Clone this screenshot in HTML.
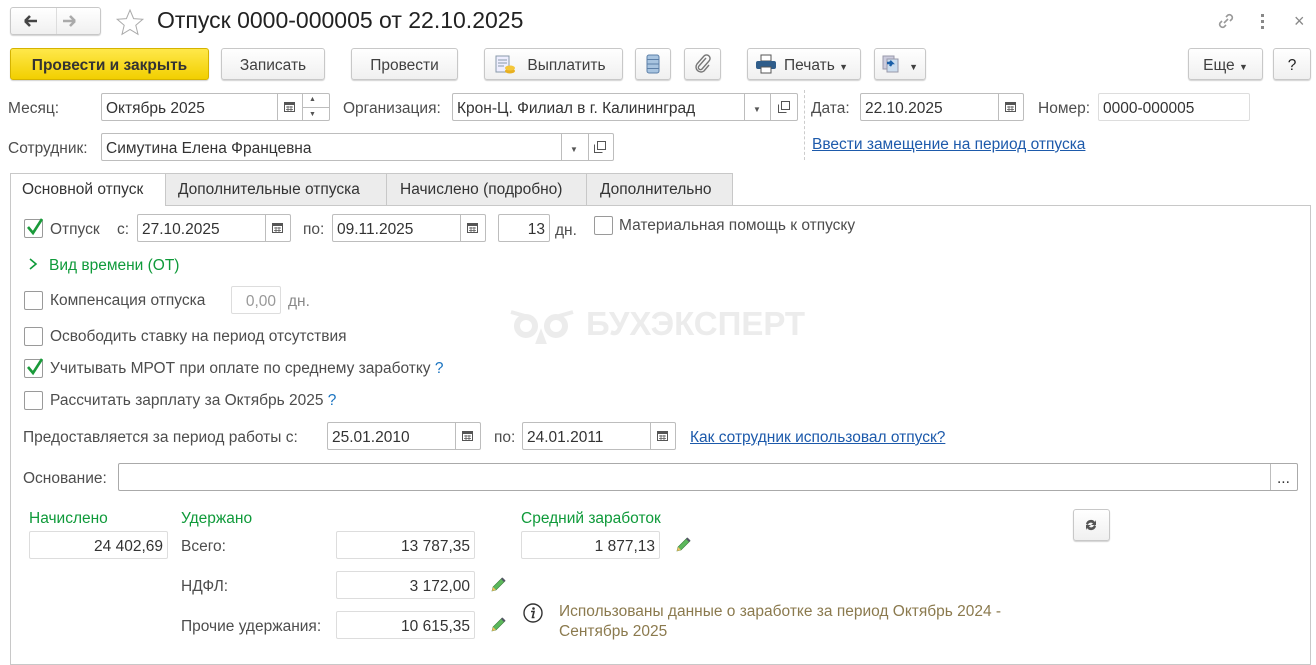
<!DOCTYPE html>
<html><head><meta charset="utf-8">
<style>
*{box-sizing:border-box;margin:0;padding:0}
body{width:1316px;height:649px;overflow:hidden;background:#fff;font-family:"Liberation Sans",Arial,sans-serif;font-size:15.5px;color:#4d4d4d;position:relative}
.a{position:absolute;white-space:nowrap}
div.a{margin-top:2px}
.btn{position:absolute;border:1px solid #c8c8c8;border-radius:3px;background:linear-gradient(#fff,#f0f0f0);box-shadow:0 1px 1px rgba(0,0,0,.18);color:#404040;text-align:center;line-height:33px;height:32px}
.f{position:absolute;border:1px solid #bdbdbd;border-radius:2px;background:#fff;height:28px;line-height:29px;padding:0 4px;color:#333}
.r{text-align:right}
.sep{position:absolute;top:0;bottom:0;border-left:1px solid #bdbdbd}
.cb{position:absolute;width:19px;height:19px;border:1px solid #9a9a9a;border-radius:2px;background:#fff}
.g{color:#0f9a3a}
.lnk{color:#1d5aab;text-decoration:underline}
.q{color:#1a73c0}
.cal{position:absolute;width:11px;height:11px}
</style></head><body>
<!-- header -->
<div class="btn" style="left:10px;top:7px;width:91px;height:28px;line-height:26px"><div class="sep" style="left:45px;border-color:#ddd"></div></div>
<svg class="a" style="left:22px;top:13px" width="70" height="16"><path d="M3 8h12M3 8l5-5M3 8l5 5" stroke="#444" stroke-width="2.6" fill="none"/><path d="M53 8h-12M53 8l-5-5M53 8l-5 5" stroke="#aaa" stroke-width="2.6" fill="none"/></svg>
<svg class="a" style="left:115px;top:8px" width="30" height="28"><path d="M15 2l3.6 8.6 9.2.7-7 6 2.2 9-8-4.8-8 4.8 2.2-9-7-6 9.2-.7z" fill="none" stroke="#aaa" stroke-width="1"/></svg>
<div class="a" style="left:157px;top:7px;font-size:23px;color:#222;margin-top:0">Отпуск 0000-000005 от 22.10.2025</div>
<svg class="a" style="left:1215px;top:10px" width="22" height="22"><g fill="none" stroke="#999" stroke-width="1.6"><path d="M9 13l4-4"/><path d="M7 11l-2 2a3 3 0 004 4l2-2"/><path d="M15 11l2-2a3 3 0 00-4-4l-2 2"/></g></svg>
<div class="a" style="left:1261px;top:12px;width:4px"><div style="width:3px;height:3px;background:#888;margin-bottom:3px"></div><div style="width:3px;height:3px;background:#888;margin-bottom:3px"></div><div style="width:3px;height:3px;background:#888"></div></div>
<div class="a" style="left:1294px;top:9px;font-size:18px;color:#888">×</div>
<!-- toolbar -->
<div class="btn" style="left:10px;top:48px;width:199px;background:linear-gradient(#ffe84a,#f2cf00);border-color:#d5b300;color:#333;font-weight:bold">Провести и закрыть</div>
<div class="btn" style="left:221px;top:48px;width:104px">Записать</div>
<div class="btn" style="left:351px;top:48px;width:107px">Провести</div>
<div class="btn" style="left:484px;top:48px;width:139px;padding-left:26px">Выплатить</div>
<svg class="a" style="left:495px;top:55px" width="22" height="20"><rect x="1" y="1" width="13" height="16" fill="#eef" stroke="#8899aa"/><path d="M3 5h9M3 8h9M3 11h6" stroke="#8899aa"/><ellipse cx="15" cy="16" rx="5" ry="2.5" fill="#e8b020"/><ellipse cx="15" cy="13" rx="5" ry="2.5" fill="#f4c63a"/></svg>
<div class="btn" style="left:635px;top:48px;width:36px"></div>
<svg class="a" style="left:646px;top:54px" width="14" height="20"><rect x="1" y="1" width="12" height="18" rx="2" fill="#a8c4e0" stroke="#5c7fa8"/><path d="M1 5.5h12M1 10h12M1 14.5h12" stroke="#5c7fa8"/></svg>
<div class="btn" style="left:684px;top:48px;width:37px"></div>
<svg class="a" style="left:693px;top:54px" width="20" height="20"><path d="M13 4l-7 8a2 2 0 003 3l7-8a3.5 3.5 0 00-5-5l-7 8a5 5 0 007 7l5-6" fill="none" stroke="#777" stroke-width="1.4"/></svg>
<div class="btn" style="left:747px;top:48px;width:114px;text-align:left;padding-left:36px">Печать <span style="font-size:9px">▼</span></div>
<svg class="a" style="left:755px;top:54px" width="22" height="20"><rect x="6" y="1" width="10" height="6" fill="#fff" stroke="#555"/><rect x="1" y="7" width="20" height="8" rx="2" fill="#2f5d8a"/><rect x="6" y="13" width="10" height="6" fill="#fff" stroke="#555"/></svg>
<div class="btn" style="left:874px;top:48px;width:52px;text-align:right;padding-right:7px"><span style="font-size:9px">▼</span></div>
<svg class="a" style="left:881px;top:54px" width="20" height="20"><rect x="2" y="2" width="11" height="13" fill="#ccd" stroke="#99a"/><rect x="6" y="5" width="11" height="13" fill="#cde" stroke="#99a"/><path d="M6 9h5l-2-2M11 9l-2 3" stroke="#1a5fa8" stroke-width="2.4" fill="none"/></svg>
<div class="btn" style="left:1188px;top:48px;width:75px">Еще <span style="font-size:9px">▼</span></div>
<div class="btn" style="left:1273px;top:48px;width:38px;color:#222">?</div>
<!-- row1 -->
<div class="a" style="left:8px;top:98px">Месяц:</div>
<div class="f" style="left:101px;top:93px;width:229px">Октябрь 2025<div class="sep" style="left:175px"></div><div class="sep" style="left:200px"></div><div style="position:absolute;left:200px;right:0;top:13px;border-top:1px solid #bdbdbd"></div><div class="a" style="left:207px;top:-9px;font-size:7px;color:#555;margin-top:0">▲</div><div class="a" style="left:207px;top:6px;font-size:7px;color:#555;margin-top:0">▼</div></div>
<svg class="cal" style="left:284px;top:101px"><rect x="0.5" y="1.5" width="10" height="9" fill="#fff" stroke="#555"/><rect x="0.5" y="1.5" width="10" height="2.5" fill="#555"/><path d="M2 6h7M2 8.5h7M4 5v5M7 5v5" stroke="#555" stroke-width=".8"/></svg>
<div class="a" style="left:343px;top:98px">Организация:</div>
<div class="f" style="left:452px;top:93px;width:346px">Крон-Ц. Филиал в г. Калининград<div class="sep" style="left:291px"></div><div class="sep" style="left:317px"></div><div class="a" style="left:300px;top:1px;font-size:8px;color:#555;margin-top:0">▼</div></div>
<svg class="a" style="left:778px;top:101px" width="12" height="12"><rect x="3.5" y="0.5" width="8" height="8" fill="none" stroke="#555"/><path d="M0.5 3.5v8h8" fill="none" stroke="#555"/></svg>
<div class="a" style="left:804px;top:90px;height:70px;border-left:1px dashed #ccc;margin-top:0"></div>
<div class="a" style="left:811px;top:98px">Дата:</div>
<div class="f" style="left:860px;top:93px;width:164px">22.10.2025<div class="sep" style="left:137px"></div></div>
<svg class="cal" style="left:1005px;top:101px"><rect x="0.5" y="1.5" width="10" height="9" fill="#fff" stroke="#555"/><rect x="0.5" y="1.5" width="10" height="2.5" fill="#555"/><path d="M2 6h7M2 8.5h7M4 5v5M7 5v5" stroke="#555" stroke-width=".8"/></svg>
<div class="a" style="left:1038px;top:98px">Номер:</div>
<div class="f" style="left:1098px;top:93px;width:152px;border-color:#ddd">0000-000005</div>
<!-- row2 -->
<div class="a" style="left:8px;top:138px">Сотрудник:</div>
<div class="f" style="left:101px;top:133px;width:513px">Симутина Елена Францевна<div class="sep" style="left:459px"></div><div class="sep" style="left:486px"></div><div class="a" style="left:468px;top:1px;font-size:8px;color:#555;margin-top:0">▼</div></div>
<svg class="a" style="left:594px;top:141px" width="12" height="12"><rect x="3.5" y="0.5" width="8" height="8" fill="none" stroke="#555"/><path d="M0.5 3.5v8h8" fill="none" stroke="#555"/></svg>
<div class="a lnk" style="left:812px;top:134px">Ввести замещение на период отпуска</div>
<!-- tabs -->
<div class="a" style="left:10px;top:205px;width:1301px;height:460px;border:1px solid #c8c8c8;margin-top:0"></div>
<div class="a" style="left:10px;top:173px;width:156px;height:33px;border:1px solid #c8c8c8;border-bottom:none;background:#fff;padding:7px 0 0 11px;color:#333;margin-top:0">Основной отпуск</div>
<div class="a" style="left:165px;top:173px;width:222px;height:33px;border:1px solid #c8c8c8;background:#ececec;padding:7px 0 0 12px;color:#333;margin-top:0">Дополнительные отпуска</div>
<div class="a" style="left:386px;top:173px;width:201px;height:33px;border:1px solid #c8c8c8;background:#ececec;padding:7px 0 0 13px;color:#333;margin-top:0">Начислено (подробно)</div>
<div class="a" style="left:586px;top:173px;width:147px;height:33px;border:1px solid #c8c8c8;background:#ececec;padding:7px 0 0 13px;color:#333;margin-top:0">Дополнительно</div>
<!-- watermark -->
<svg class="a" style="left:509px;top:306px" width="68" height="38"><g fill="none" stroke="#ececec" stroke-width="6"><circle cx="17" cy="20" r="9"/><circle cx="47" cy="20" r="9"/></g><path d="M2 6l14 4M64 6l-14 4M32 28l-3 8h6z" stroke="#ececec" stroke-width="4" fill="#ececec"/></svg>
<div class="a" style="left:586px;top:303px;font-size:33px;font-weight:bold;color:#ececec">БУХЭКСПЕРТ</div>
<!-- content -->
<div class="cb" style="left:24px;top:219px"></div><svg class="a" style="left:25px;top:217px" width="20" height="20"><path d="M3 10l5 6 9-14" fill="none" stroke="#1a9a3a" stroke-width="2.6"/></svg>
<div class="a" style="left:50px;top:219px">Отпуск</div><div class="a" style="left:117px;top:219px">с:</div>
<div class="f" style="left:137px;top:214px;width:154px">27.10.2025<div class="sep" style="left:127px"></div></div>
<svg class="cal" style="left:272px;top:222px"><rect x="0.5" y="1.5" width="10" height="9" fill="#fff" stroke="#555"/><rect x="0.5" y="1.5" width="10" height="2.5" fill="#555"/><path d="M2 6h7M2 8.5h7M4 5v5M7 5v5" stroke="#555" stroke-width=".8"/></svg>
<div class="a" style="left:303px;top:219px">по:</div>
<div class="f" style="left:332px;top:214px;width:154px">09.11.2025<div class="sep" style="left:127px"></div></div>
<svg class="cal" style="left:467px;top:222px"><rect x="0.5" y="1.5" width="10" height="9" fill="#fff" stroke="#555"/><rect x="0.5" y="1.5" width="10" height="2.5" fill="#555"/><path d="M2 6h7M2 8.5h7M4 5v5M7 5v5" stroke="#555" stroke-width=".8"/></svg>
<div class="f r" style="left:498px;top:214px;width:52px">13</div>
<div class="a" style="left:555px;top:220px">дн.</div>
<div class="cb" style="left:594px;top:216px"></div>
<div class="a" style="left:619px;top:215px">Материальная помощь к отпуску</div>
<svg class="a" style="left:28px;top:257px" width="10" height="14"><path d="M2 2l6 5-6 5" fill="none" stroke="#0f9a3a" stroke-width="1.6"/></svg>
<div class="a g" style="left:49px;top:255px">Вид времени (ОТ)</div>
<div class="cb" style="left:24px;top:291px"></div><div class="a" style="left:50px;top:290px">Компенсация отпуска</div>
<div class="f r" style="left:231px;top:286px;width:50px;color:#999;border-color:#ddd">0,00</div>
<div class="a" style="left:288px;top:291px;color:#888">дн.</div>
<div class="cb" style="left:24px;top:327px"></div><div class="a" style="left:50px;top:326px">Освободить ставку на период отсутствия</div>
<div class="cb" style="left:24px;top:359px"></div><svg class="a" style="left:25px;top:357px" width="20" height="20"><path d="M3 10l5 6 9-14" fill="none" stroke="#1a9a3a" stroke-width="2.6"/></svg>
<div class="a" style="left:50px;top:358px">Учитывать МРОТ при оплате по среднему заработку <span class="q">?</span></div>
<div class="cb" style="left:24px;top:391px"></div><div class="a" style="left:50px;top:390px">Рассчитать зарплату за Октябрь 2025 <span class="q">?</span></div>
<div class="a" style="left:23px;top:427px">Предоставляется за период работы с:</div>
<div class="f" style="left:327px;top:422px;width:154px">25.01.2010<div class="sep" style="left:127px"></div></div>
<svg class="cal" style="left:462px;top:430px"><rect x="0.5" y="1.5" width="10" height="9" fill="#fff" stroke="#555"/><rect x="0.5" y="1.5" width="10" height="2.5" fill="#555"/><path d="M2 6h7M2 8.5h7M4 5v5M7 5v5" stroke="#555" stroke-width=".8"/></svg>
<div class="a" style="left:494px;top:427px">по:</div>
<div class="f" style="left:522px;top:422px;width:154px">24.01.2011<div class="sep" style="left:127px"></div></div>
<svg class="cal" style="left:657px;top:430px"><rect x="0.5" y="1.5" width="10" height="9" fill="#fff" stroke="#555"/><rect x="0.5" y="1.5" width="10" height="2.5" fill="#555"/><path d="M2 6h7M2 8.5h7M4 5v5M7 5v5" stroke="#555" stroke-width=".8"/></svg>
<div class="a lnk" style="left:690px;top:427px">Как сотрудник использовал отпуск?</div>
<div class="a" style="left:23px;top:468px">Основание:</div>
<div class="f" style="left:118px;top:463px;width:1180px;border-color:#aaa"><div class="sep" style="left:1151px"></div><div class="a" style="left:1158px;top:0;color:#333;margin-top:0">...</div></div>
<div class="a g" style="left:29px;top:508px">Начислено</div>
<div class="a g" style="left:181px;top:508px">Удержано</div>
<div class="a g" style="left:521px;top:508px">Средний заработок</div>
<div class="btn" style="left:1073px;top:509px;width:37px"></div>
<svg class="a" style="left:1084px;top:518px" width="14" height="14"><path d="M2 6a5 5 0 019-2l1-2v5H7l2-1.5A3 3 0 004 7z" fill="#555"/><path d="M12 8a5 5 0 01-9 2l-1 2V7h5l-2 1.5A3 3 0 0010 7z" fill="#555"/></svg>
<div class="f r" style="left:29px;top:531px;width:139px;border-color:#ddd">24 402,69</div>
<div class="a" style="left:181px;top:536px">Всего:</div>
<div class="f r" style="left:336px;top:531px;width:139px;border-color:#ddd">13 787,35</div>
<div class="f r" style="left:521px;top:531px;width:139px;border-color:#ddd">1 877,13</div>
<div class="a" style="left:181px;top:576px">НДФЛ:</div>
<div class="f r" style="left:336px;top:571px;width:139px;border-color:#ddd">3 172,00</div>
<div class="a" style="left:181px;top:616px">Прочие удержания:</div>
<div class="f r" style="left:336px;top:611px;width:139px;border-color:#ddd">10 615,35</div>
<svg class="a" style="left:674px;top:536px" width="18" height="18"><path d="M3 15l1-4 9-9 3 3-9 9z" fill="#5cb85c" stroke="#3a7a3a" stroke-width=".6"/><path d="M12 3l3 3 1.5-1.5-3-3z" fill="#556"/><path d="M3 15l1-4 3 3z" fill="#f0c060"/></svg>
<svg class="a" style="left:489px;top:576px" width="18" height="18"><path d="M3 15l1-4 9-9 3 3-9 9z" fill="#5cb85c" stroke="#3a7a3a" stroke-width=".6"/><path d="M12 3l3 3 1.5-1.5-3-3z" fill="#556"/><path d="M3 15l1-4 3 3z" fill="#f0c060"/></svg>
<svg class="a" style="left:489px;top:616px" width="18" height="18"><path d="M3 15l1-4 9-9 3 3-9 9z" fill="#5cb85c" stroke="#3a7a3a" stroke-width=".6"/><path d="M12 3l3 3 1.5-1.5-3-3z" fill="#556"/><path d="M3 15l1-4 3 3z" fill="#f0c060"/></svg>
<svg class="a" style="left:522px;top:602px" width="22" height="22"><circle cx="11" cy="11" r="9" fill="none" stroke="#333" stroke-width="1.4"/><circle cx="11.5" cy="6.5" r="1.3" fill="#333"/><path d="M9 9.5h3l-1.5 6h2" fill="none" stroke="#333" stroke-width="1.6"/></svg>
<div class="a" style="left:559px;top:600px;color:#8b7a4e;line-height:20px">Использованы данные о заработке за период Октябрь 2024 -<br>Сентябрь 2025</div>
</body></html>
